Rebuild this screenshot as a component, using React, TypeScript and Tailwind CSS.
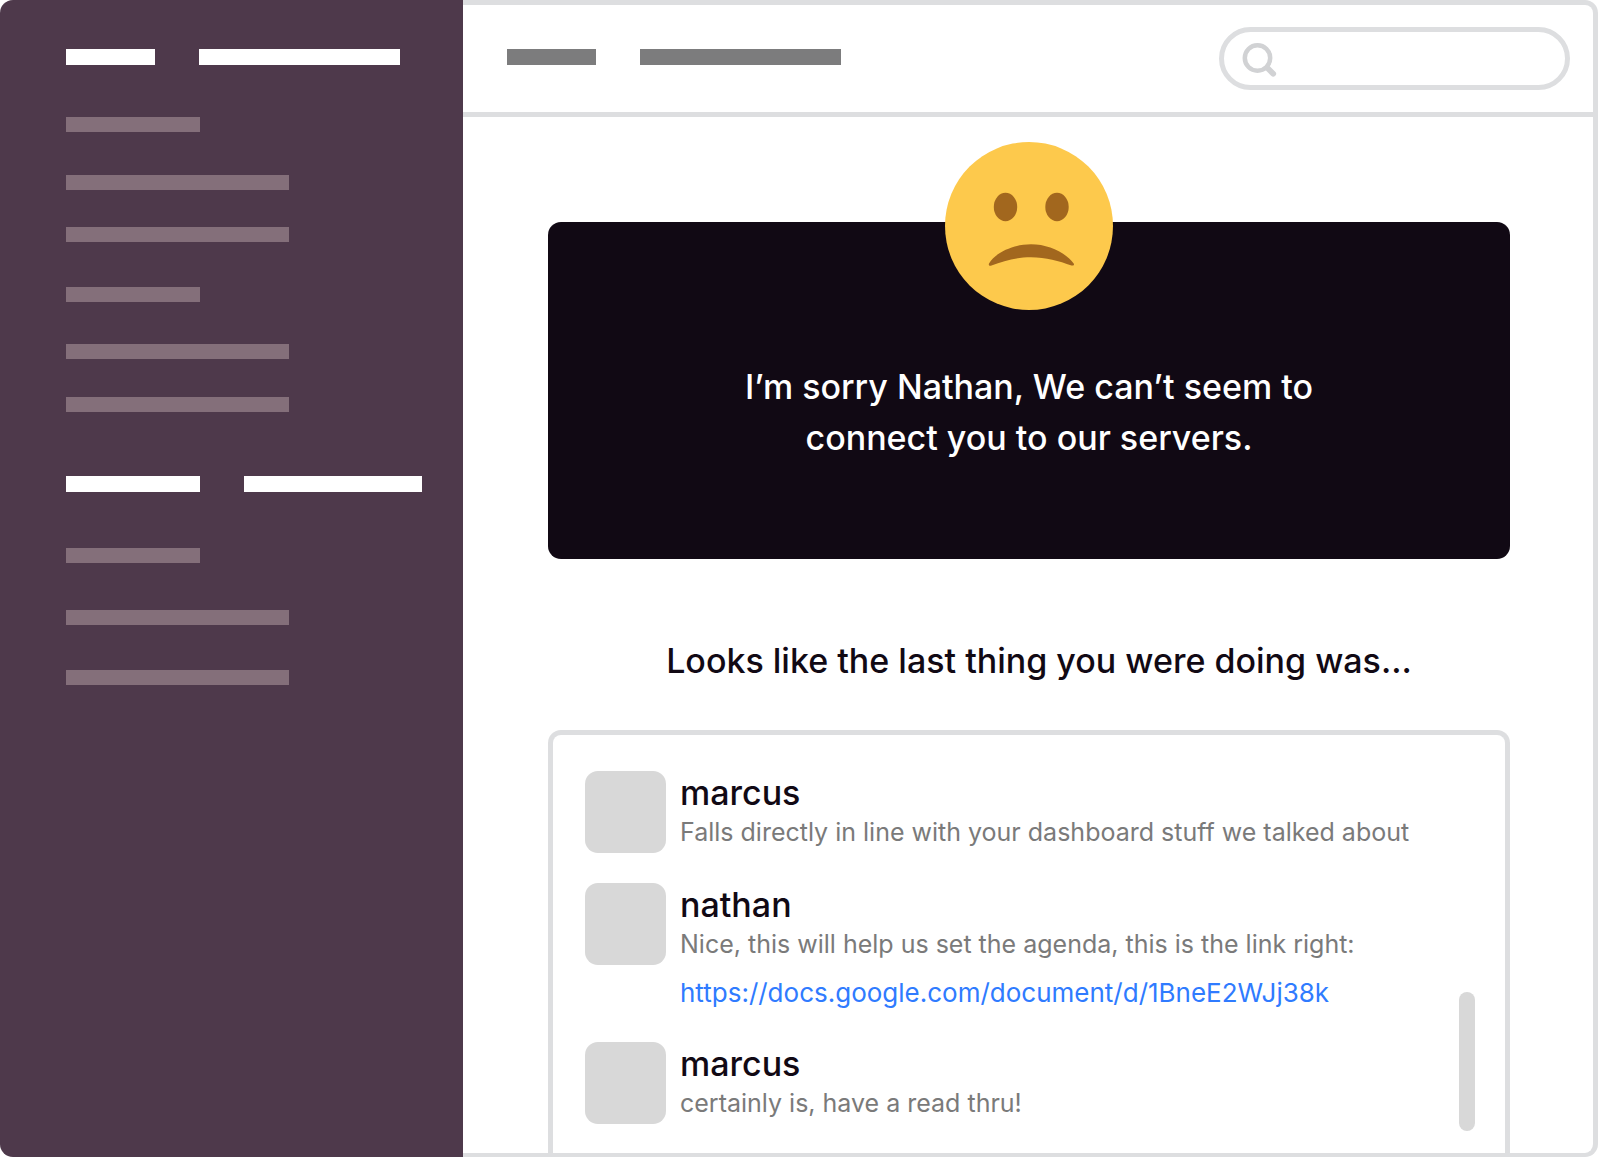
const messages = [
  { author: "marcus", text: "Falls directly in line with your dashboard stuff we talked about" },
  {
    author: "nathan",
    text: "Nice, this will help us set the agenda, this is the link right:",
    link: "https://docs.google.com/document/d/1BneE2WJj38k",
  },
  { author: "marcus", text: "certainly is, have a read thru!" },
];

const SadFace = () => (
  <svg className="h-[168px] w-[168px]" viewBox="0 0 168 168" role="img" aria-label="Sad face">
    <circle cx="84" cy="84" r="84" fill="#fdc94c" />
    <ellipse cx="60.5" cy="65" rx="11.7" ry="14.2" fill="#a2671e" />
    <ellipse cx="112" cy="65" rx="11.7" ry="14.2" fill="#a2671e" />
    <path
      d="M44 121.5C50 111 68 102.300 86 102.300C104 102.300 121 111 128.700 121.500C129.500 123.300 128.500 123.900 126.500 123.500C114 119 101 115.200 86 115.200C71 115.200 59 119 46.500 123.500C44.500 124 43.300 123.400 44 121.500Z"
      fill="#a2671e"
    />
  </svg>
);

const SearchBox = () => (
  <label className="flex h-[63px] w-[351px] items-center gap-3 rounded-full border-5 border-[#dddee0] px-[18px]">
    <svg className="h-9 w-9 shrink-0" viewBox="0 0 36 36" fill="none" stroke="#d1d2d4" aria-hidden="true">
      <circle cx="15.500" cy="17" r="12.700" strokeWidth="4.500" />
      <path d="M25.500 27L31.200 32.700" strokeWidth="5.800" strokeLinecap="round" />
    </svg>
    <input type="search" aria-label="Search" className="w-full min-w-0 bg-transparent text-2xl text-[#110914] outline-none" />
  </label>
);

const Sidebar = () => (
  <aside className="w-[463px] shrink-0 rounded-l-[13px] bg-[#4e394b] pt-[49px] pl-[66px]">
    <div className="flex gap-11">
      <div className="h-4 w-[89px] bg-white" />
      <div className="h-4 w-[201px] bg-white" />
    </div>
    <div className="mt-[52px] h-[15px] w-[134px] bg-[#846f7a]" />
    <div className="mt-[43px] h-[15px] w-[223px] bg-[#846f7a]" />
    <div className="mt-[37px] h-[15px] w-[223px] bg-[#846f7a]" />
    <div className="mt-[45px] h-[15px] w-[134px] bg-[#846f7a]" />
    <div className="mt-[42px] h-[15px] w-[223px] bg-[#846f7a]" />
    <div className="mt-[38px] h-[15px] w-[223px] bg-[#846f7a]" />
    <div className="mt-16 flex gap-11">
      <div className="h-4 w-[134px] bg-white" />
      <div className="h-4 w-[178px] bg-white" />
    </div>
    <div className="mt-14 h-[15px] w-[134px] bg-[#846f7a]" />
    <div className="mt-[47px] h-[15px] w-[223px] bg-[#846f7a]" />
    <div className="mt-[45px] h-[15px] w-[223px] bg-[#846f7a]" />
  </aside>
);

const Message = ({ message }: any) => {
  const { author, text, link } = message;

  return (
    <li className="flex gap-[14px]">
      <div className="h-[82px] w-[81px] shrink-0 rounded-[13px] bg-[#d8d8d8]" />
      <div className="pt-[2px]">
        <h3 className="text-[34px] leading-10 font-medium text-[#110914]">{author}</h3>
        <p className="text-[25px] leading-[38px] text-[#7a7a7a]">{text}</p>
        {link && (
          <a href={link} className="mt-[11px] block text-[26px] leading-[38px] text-[#2f7bff]">
            {link}
          </a>
        )}
      </div>
    </li>
  );
};

const App = () => {
  return (
    <div className="flex min-h-screen bg-white pr-[2px] font-['Inter','Liberation_Sans',sans-serif]">
      <Sidebar />
      <main className="flex min-w-0 flex-1 flex-col rounded-r-[13px] border-5 border-b-4 border-l-0 border-[#dddee0]">
        <header className="flex h-28 items-center justify-between border-b-5 border-[#dddee0] pr-[23px] pl-11">
          <div className="mb-1 flex gap-11">
            <div className="h-4 w-[89px] bg-[#7c7c7d]" />
            <div className="h-4 w-[201px] bg-[#7c7c7d]" />
          </div>
          <SearchBox />
        </header>

        <div className="flex flex-1 flex-col pt-[105px] pr-[83px] pl-[85px]">
          <section className="flex flex-col items-center rounded-[13px] bg-[#110914] pb-24">
            <div className="-mt-20">
              <SadFace />
            </div>
            <p className="mt-[51px] text-center text-[34px] leading-[51px] font-medium text-white">
              I’m sorry Nathan, We can’t seem to
              <br />
              connect you to our servers.
            </p>
          </section>

          <h2 className="mt-[76px] mb-11 pl-5 text-center text-[34px] leading-[51px] font-medium text-[#110914]">
            Looks like the last thing you were doing was...
          </h2>

          <section className="flex flex-1 rounded-t-[13px] border-5 border-b-0 border-[#dddee0] pt-9 pr-[30px] pl-8">
            <ul className="flex flex-1 flex-col gap-[30px] pb-7">
              {messages.map((message, index) => (
                <Message key={index} message={message} />
              ))}
            </ul>
            <div className="mb-[22px] h-[139px] w-4 self-end rounded-full bg-[#d8d8d8]" />
          </section>
        </div>
      </main>
    </div>
  );
};

export default App;
